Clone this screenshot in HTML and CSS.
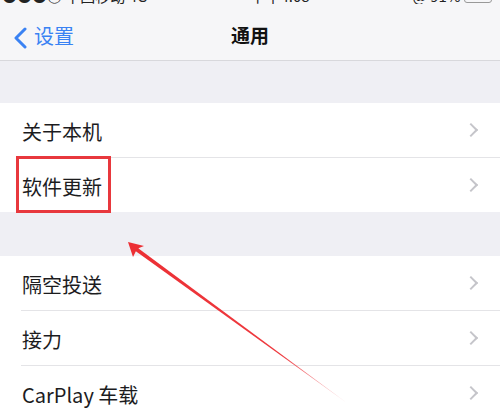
FILE: index.html
```html
<!DOCTYPE html>
<html lang="zh-CN">
<head>
  <meta charset="UTF-8" />
  <title>通用</title>
  <link rel="stylesheet" href="styles.css">
</head>
<body>

<div class="screen">
  <div class="status-bar">
    <span class="carrier">●●●○ 中国移动 4G</span>
    <span class="clock">下午4:08</span>
    <span class="power">@ 91% <i class="battery"></i></span>
  </div>

  <header class="nav">
    <a class="back" href="#">
      <svg width="16" height="22" viewBox="0 0 16 22"><path d="M13 2 L4 11 L13 20" fill="none" stroke="currentColor" stroke-width="3" stroke-linecap="round" stroke-linejoin="round"/></svg>
      <span>设置</span>
    </a>
    <h1>通用</h1>
  </header>

  <div class="gap"></div>

  <ul class="group">
    <li class="row"><span>关于本机</span><i class="chev"></i></li>
    <li class="row"><span>软件更新</span><i class="chev"></i><b class="mark"></b></li>
  </ul>

  <div class="gap gap-lg"></div>

  <ul class="group">
    <li class="row"><span>隔空投送</span><i class="chev"></i></li>
    <li class="row"><span>接力</span><i class="chev"></i></li>
    <li class="row"><span>CarPlay 车载</span><i class="chev"></i></li>
  </ul>

  <!-- red annotation arrow -->
  <svg class="arrow" width="500" height="416" viewBox="0 0 500 416">
    <defs>
      <linearGradient id="fade" x1="128" y1="242" x2="347" y2="403" gradientUnits="userSpaceOnUse">
        <stop offset="0" stop-color="#ec2f34"/>
        <stop offset="0.7" stop-color="#ee3a3f"/>
        <stop offset="1" stop-color="#f4a3a9" stop-opacity="0.6"/>
      </linearGradient>
    </defs>
    <polygon points="137.2,247.4 134.8,250.6 347,403" fill="url(#fade)"/>
    <polygon points="128,242 144,246 139,248 136,251 133,257" fill="#ec2f34"/>
  </svg>
</div>

</body>
</html>
```

FILE: styles.css
```css
* {
  margin: 0;
  padding: 0;
  box-sizing: border-box;
}

html, body {
  width: 500px;
  height: 416px;
  overflow: hidden;
  background: #efeff4;
  font-family: "Noto Sans CJK SC", "Noto Sans", sans-serif;
  color: #1c1c1e;
}

.screen {
  position: relative;
  height: 416px;
}

/* status bar, only its bottom edge is visible */
.status-bar {
  height: 4px;
  overflow: hidden;
  display: flex;
  align-items: flex-end;
  justify-content: space-between;
  padding: 0 8px 0 2px;
  background: #f6f6f8;
  font-size: 15px;
  line-height: 15px;
  color: #222;
}

.status-bar span {
  margin-bottom: 1px;
}

.battery {
  display: inline-block;
  width: 28px;
  height: 13px;
  border: 1px solid #999;
  border-radius: 3px;
  vertical-align: bottom;
}

/* nav bar */
.nav {
  position: relative;
  height: 57px;
  display: flex;
  align-items: center;
  justify-content: center;
  padding-top: 4px;
  background: #f6f6f8;
  border-bottom: 1px solid #d8d8dc;
}

.back {
  position: absolute;
  left: 12px;
  top: 21px;
  display: flex;
  align-items: center;
  gap: 6px;
  color: #3a82f3;
  text-decoration: none;
  font-size: 20px;
}

.back span {
  margin-top: -4px;
}

.nav h1 {
  font-size: 19px;
  font-weight: 700;
  color: #111;
}

.gap {
  height: 42px;
  background: #efeff4;
}

.gap-lg {
  height: 44px;
}

/* table rows */
.group {
  list-style: none;
  background: #fff;
  padding-left: 21px;
}

.row {
  height: 54px;
  display: flex;
  align-items: center;
  justify-content: space-between;
  padding: 3px 24px 0 1px;
  font-size: 20px;
  position: relative;
}

.row + .row {
  height: 55px;
  border-top: 1px solid #e4e4e7;
}

.chev {
  width: 10px;
  height: 10px;
  margin-top: -3px;
  border-top: 2px solid #c5c5ca;
  border-right: 2px solid #c5c5ca;
  transform: rotate(45deg);
}

.mark {
  position: absolute;
  left: -5px;
  top: -2px;
  width: 95px;
  height: 57px;
  border: 3px solid #e8383d;
}

.arrow {
  position: absolute;
  left: 0;
  top: 0;
  pointer-events: none;
}
```
